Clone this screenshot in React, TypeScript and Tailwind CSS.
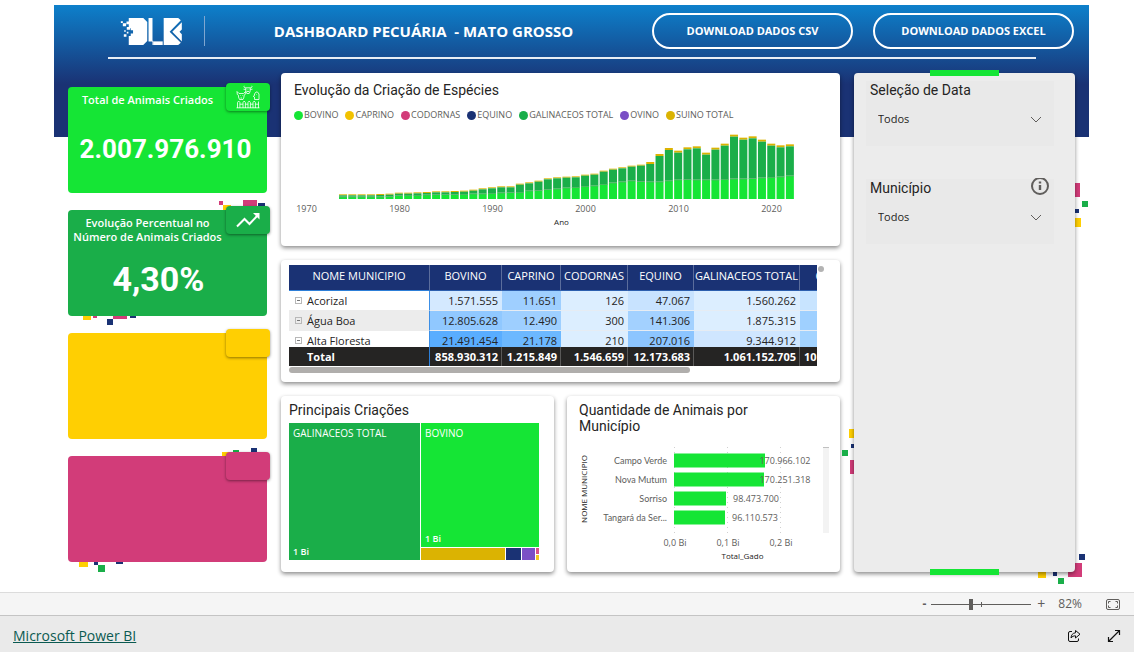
import React from "react";

type Square = [x: number, y: number, w: number, h: number, color: string];

const YELLOW = "#ffcf02";
const PINK = "#d23c79";
const NAVY = "#1a3274";
const GREEN = "#1aae49";

function Confetti({ squares }: { squares: Square[] }) {
  return (
    <svg className="pointer-events-none absolute inset-0 h-full w-full overflow-visible" aria-hidden="true">
      {squares.map(([x, y, w, h, c], i) => (
        <rect key={i} x={x} y={y} width={w} height={h} fill={c} />
      ))}
    </svg>
  );
}

function Logo() {
  return (
    <svg viewBox="208 50 190 88" className="h-[29px] w-[63px]" fill="#fff" role="img" aria-label="DLB">
      <path d="M234 53H278L290 65V123L278 135H234V108L240 108V100L247 100V90H240V84H234Z" />
      <path d="M210 63h6v5h-6zM216 69h10v9h-10zM227 64h8v8h-8zM220 90h5v5h-5zM219 102h8v8h-8zM228 80h10v9h-10zM228 95h5v5h-5z" />
      <path d="M294 53H306V122H308V135H306V124H294Z" />
      <path d="M308 124H337V135H308Z" />
      <path d="M340 53H384L392 60L358 95L392 128L384 135H340Z" />
      <path d="M395 66V88L388 95L395 102V124L366 95Z" />
    </svg>
  );
}

function AnimalsIcon() {
  return (
    <svg viewBox="0 0 24 24" className="h-6 w-6" fill="none" stroke="#fff" strokeWidth="0.8">
      <path d="M9 2.800C8 2.500 7.800 1.500 8.200.8M15 2.800c1-.3 1.200-1.300.8-2M9 2.800h6M7.500 4.200l2.300.3M16.500 4.200l-2.300.3M9.800 3v3.200l1 2.300h2.400l1-2.300V3M10.700 6.500h2.600M11 4.800h.4M12.700 4.800h.4" />
      <path d="M1 6.500l.3 3 1.200.8V12l1 2.500h3.500l1-2.500v-1.700l1.200-.8.3-3-2 2H3zM4 10.500h.5M6.500 10.500H7M4.500 13H6" />
      <path d="M18.500 9l1.500-2h1.500l1.500 2v5.500h-4.500V12l-1.300-.7 1.300-.8V9M20.500 9.500h.5" />
      <path d="M1.500 23v-5.500L2.700 16l1.200 1.500V23M7 23v-5.500L8.200 16l1.200 1.500V23M12 23v-5.500l1.200-1.500 1.200 1.500V23M17 23v-5.500l1.200-1.500 1.200 1.500V23M22.500 23v-6.500M.5 22.800h23M3.900 19.200H7M9.400 19.200H12M14.400 19.200H17M19.400 19.200h3.100" />
    </svg>
  );
}

function TrendIcon() {
  return (
    <svg viewBox="0 0 24 16" className="h-4 w-6" fill="none" stroke="#fff" strokeWidth="2">
      <path d="M1 14.500 8.500 7l5 5L21.500 3.500" />
      <path d="M17 1h6.500v6.500z" fill="#fff" stroke="none" />
    </svg>
  );
}

interface KpiProps {
  color: string;
  title?: string;
  value?: string;
  valueStyle?: string;
  icon?: React.ReactNode;
  squares?: Square[];
}

function Kpi({ color, title, value, valueStyle = "", icon, squares = [] }: KpiProps) {
  return (
    <section className="relative h-[106px]">
      <Confetti squares={squares} />
      <div className={`relative flex h-full flex-col items-center rounded ${color}`}>
        {title && (
          <h2 className="mt-[6px] w-full whitespace-pre-line pr-10 text-center text-[11px] leading-[14px] font-semibold text-white">
            {title}
          </h2>
        )}
        {value && (
          <p
            className={`flex flex-1 items-center pb-[2px] font-['Roboto',sans-serif] font-bold text-white ${valueStyle}`}
          >
            {value}
          </p>
        )}
      </div>
      <div
        className={`absolute -top-1 -right-[3px] flex h-7 w-11 items-center justify-center rounded-sm shadow-[0_1px_3px_rgba(0,0,0,0.45)] ${color}`}
      >
        {icon}
      </div>
    </section>
  );
}

const CARD = "rounded bg-white shadow-[0_2px_4px_rgba(0,0,0,0.45)]";
const TITLE = "font-['Roboto',sans-serif] text-sm leading-4 text-[#252423]";

const LEGEND = [
  ["BOVINO", "bg-[#15e535]"],
  ["CAPRINO", "bg-[#f2c201]"],
  ["CODORNAS", "bg-[#d23c79]"],
  ["EQUINO", "bg-[#1a3274]"],
  ["GALINACEOS TOTAL", "bg-[#1aae49]"],
  ["OVINO", "bg-[#7a4fc5]"],
  ["SUINO TOTAL", "bg-[#dbb302]"],
];

// One entry per year from 1974: total height and cattle height, in thirds of a pixel.
const TOTALS = [
  14, 14, 14, 14, 15, 16, 19, 19, 20, 21, 23, 23, 24, 25, 28, 32, 35, 38, 38, 46, 50, 55, 62, 65, 67, 68, 73, 76, 85,
  91, 95, 100, 103, 111, 135, 153, 145, 155, 158, 139, 154, 166, 193, 184, 188, 178, 166, 161, 164,
];
const CATTLE = [
  7, 7, 7, 7, 7, 8, 11, 12, 12, 13, 14, 14, 14, 15, 16, 16, 18, 19, 20, 21, 25, 26, 29, 31, 34, 36, 39, 40, 45, 49, 52,
  55, 53, 52, 52, 55, 58, 59, 58, 58, 58, 60, 61, 61, 62, 64, 66, 67, 70,
];

function SpeciesChart() {
  return (
    <svg viewBox="0 0 545 105" className="w-full" fontSize="9" textAnchor="middle" fill="#605e5c">
      {TOTALS.map((t, i) => {
        const x = 51 + i * 9.31;
        const h = t / 3;
        const b = CATTLE[i] / 3;
        const pig = i < 33 ? 1 : 2;
        return (
          <g key={i}>
            <rect x={x} y={74 - h} width="8" height={pig} fill="#dbb302" />
            <rect x={x} y={74 - h + pig} width="8" height={h - b - pig} fill="#1aae49" />
            <rect x={x} y={74 - b} width="8" height={b} fill="#15e535" />
            <rect x={x} y={74 - b} width="8" height="0.6" fill="#6a9a7c" />
          </g>
        );
      })}
      {[1970, 1980, 1990, 2000, 2010, 2020].map((year, i) => (
        <text key={year} x={18.5 + i * 93} y="87">
          {year}
        </text>
      ))}
      <text x="273.500" y="100" fontSize="8" fill="#252423">
        Ano
      </text>
    </svg>
  );
}

const COLUMNS = ["BOVINO", "CAPRINO", "CODORNAS", "EQUINO", "GALINACEOS TOTAL"];
const ROWS = [
  {
    name: "Acorizal",
    values: ["1.571.555", "11.651", "126", "47.067", "1.560.262"],
    fills: ["bg-[#d4e9ff]", "bg-[#9fcfff]", "bg-[#dceeff]", "bg-[#c8e3ff]", "bg-[#dceeff]"],
    last: "bg-[#c8e4ff]",
  },
  {
    name: "Água Boa",
    values: ["12.805.628", "12.490", "300", "141.306", "1.875.315"],
    fills: ["bg-[#90c8ff]", "bg-[#9ecfff]", "bg-[#dceeff]", "bg-[#a3d1ff]", "bg-[#dceeff]"],
    last: "bg-[#9fd0ff]",
  },
  {
    name: "Alta Floresta",
    values: ["21.491.454", "21.178", "210", "207.016", "9.344.912"],
    fills: ["bg-[#59adff]", "bg-[#6cb8ff]", "bg-[#dceeff]", "bg-[#8cc5ff]", "bg-[#cfe6ff]"],
    last: "bg-[#a3d3ff]",
  },
];
const TOTAL_ROW = ["858.930.312", "1.215.849", "1.546.659", "12.173.683", "1.061.152.705"];

function MunicipalityTable() {
  return (
    <div className={`h-[122px] py-[5px] pr-4 pl-2 ${CARD}`}>
      <div className="flex gap-px">
        <div className="h-[101px] min-w-0 flex-1 overflow-hidden">
          <table className="w-full min-w-[577px] table-fixed border-separate border-spacing-0 text-[11px] leading-[19px] text-[#252423]">
            <colgroup>
              <col className="w-[141px]" />
              <col className="w-[72px]" />
              <col className="w-[59px]" />
              <col className="w-[67px]" />
              <col className="w-[66px]" />
              <col className="w-[106px]" />
              <col />
            </colgroup>
            <thead>
              <tr className="bg-[#1a3274] text-white">
                <th className="h-[26px] border-r border-b border-r-[#5b6d9c] border-b-[#2d7fd8] pb-[5px] font-normal">
                  NOME MUNICIPIO
                </th>
                {COLUMNS.map((c) => (
                  <th
                    key={c}
                    className="border-r border-b border-r-[#5b6d9c] border-b-[#2d5fae] pb-[5px] font-normal whitespace-nowrap"
                  >
                    {c}
                  </th>
                ))}
                <th className="border-b border-b-[#2d5fae] pb-[5px] font-normal">OVINO</th>
              </tr>
            </thead>
            <tbody>
              {ROWS.map((row, i) => (
                <tr key={row.name}>
                  <td
                    className={`h-5 border-r border-b border-r-[#3c8fe6] border-b-[#ececec] ${i === 1 ? "bg-[#ececec]" : "bg-white"}`}
                  >
                    <span className="flex items-center gap-[5px] pl-[6px]">
                      <button
                        aria-label={`Recolher ${row.name}`}
                        className="flex h-[7px] w-[7px] items-center justify-center border border-[#b8b8b8]"
                      >
                        <span className="h-px w-[3px] bg-[#777]" />
                      </button>
                      {row.name}
                    </span>
                  </td>
                  {row.values.map((v, j) => (
                    <td key={j} className={`border-b border-[#e6ecf3] pr-1 text-right ${row.fills[j]}`}>
                      {v}
                    </td>
                  ))}
                  <td className={`border-b border-[#e6ecf3] ${row.last}`} />
                </tr>
              ))}
            </tbody>
            <tfoot className="sticky bottom-0">
              <tr className="bg-[#252423] font-bold text-white">
                <td className="h-[19px] border-r border-[#2d7fd8] pl-[18px]">Total</td>
                {TOTAL_ROW.map((v) => (
                  <td key={v} className="border-r border-[#5a5958] pr-[3px] text-right">
                    {v}
                  </td>
                ))}
                <td className="pl-1">10</td>
              </tr>
            </tfoot>
          </table>
        </div>
        <div className="mt-px h-[6px] w-[6px] rounded-full bg-[#b3b3b3]" />
      </div>
      <div className="mt-px mr-[7px] h-[6px]">
        <div className="h-full w-[76%] rounded-full bg-[#b0aeac]" />
      </div>
    </div>
  );
}

function Treemap() {
  return (
    <div className="flex h-[137px] gap-px text-[10px] leading-4 text-white">
      <div className="flex w-[131px] flex-col justify-between bg-[#1aae49] px-1 pt-[2px]">
        <span className="whitespace-nowrap">GALINACEOS TOTAL</span>
        <span className="text-[9px] font-semibold">1 Bi</span>
      </div>
      <div className="flex flex-1 flex-col gap-px">
        <div className="flex flex-1 flex-col justify-between bg-[#15e535] px-1 pt-[2px]">
          <span>BOVINO</span>
          <span className="text-[9px] font-semibold">1 Bi</span>
        </div>
        <div className="flex h-3 gap-px">
          <div className="flex-1 bg-[#dbb302]" />
          <div className="w-[15px] bg-[#1a3274]" />
          <div className="w-[13px] bg-[#7a4fc5]" />
          <div className="flex w-[3px] flex-col gap-px">
            <div className="flex-1 bg-[#d8508a]" />
            <div className="h-[5px] bg-[#f2c820]" />
          </div>
        </div>
      </div>
    </div>
  );
}

const CITIES: [name: string, value: string, bar: number, x: number][] = [
  ["Campo Verde", "170.966.102", 91, 210],
  ["Nova Mutum", "170.251.318", 90, 210],
  ["Sorriso", "98.473.700", 52, 181],
  ["Tangará da Ser...", "96.110.573", 51, 180],
];

function CityChart() {
  return (
    <svg viewBox="0 0 257 120" className="w-full" fontSize="9" fill="#605e5c">
      {[99.5, 152.5, 205.5].map((x) => (
        <line key={x} x1={x} x2={x} y1="2" y2="90" stroke="#d0d0d0" strokeDasharray="1 4" />
      ))}
      <rect x="248" y="2" width="6" height="86" fill="#f3f3f3" />
      <rect x="248" y="2" width="6" height="1" fill="#c0c0c0" />
      {CITIES.map(([name, value, bar, x], i) => (
        <g key={name}>
          <rect x="99" y={8.5 + i * 19} width={bar} height="14" fill="#15e535" />
          <text x="92" y={19 + i * 19} textAnchor="end" className="font-['Lato',sans-serif]">
            {name}
          </text>
          <text x={x} y={19 + i * 19} textAnchor="middle">
            {value}
          </text>
        </g>
      ))}
      {["0,0 Bi", "0,1 Bi", "0,2 Bi"].map((t, i) => (
        <text key={t} x={100 + i * 53} y="101" textAnchor="middle">
          {t}
        </text>
      ))}
      <text x="167.500" y="114" fontSize="8" textAnchor="middle" fill="#252423">
        Total_Gado
      </text>
      <text transform="translate(12 44) rotate(-90)" fontSize="8" textAnchor="middle" fill="#252423">
        NOME MUNICIPIO
      </text>
    </svg>
  );
}

function Slicer({ id, label, info }: { id: string; label: string; info?: boolean }) {
  return (
    <div className="flex h-[65px] flex-col bg-[#e9e9e9] px-1">
      <div className="flex h-[18px] items-center justify-between">
        <label htmlFor={id} className={TITLE}>
          {label}
        </label>
        {info && (
          <svg viewBox="0 0 20 20" className="h-5 w-5" fill="none" stroke="#605e5c" strokeWidth="2">
            <circle cx="10" cy="8" r="8" />
            <path d="M10 7v5M10 3.500v2" strokeWidth="2.400" />
          </svg>
        )}
      </div>
      <div className="relative mt-[10px] flex items-center px-2">
        <select id={id} className="h-5 w-full appearance-none bg-transparent text-[11px] text-[#252423] outline-none">
          <option>Todos</option>
        </select>
        <svg
          viewBox="0 0 12 7"
          className="pointer-events-none absolute right-2 h-[7px] w-3"
          fill="none"
          stroke="#605e5c"
          strokeWidth="1"
        >
          <path d="M1 1l5 5 5-5" />
        </svg>
      </div>
    </div>
  );
}

const PILL =
  "h-9 w-[201px] rounded-full border-2 border-white text-[11px] font-bold text-white hover:bg-white/10";

export default function App() {
  return (
    <div className="flex min-h-screen flex-col bg-white font-['Open_Sans','Noto_Sans',sans-serif]">
      <main className="flex-1 pt-[5px] pr-[45px] pb-5 pl-[54px]">
        <div className="bg-[linear-gradient(#0d80cb,#1a3274_60%)] bg-[length:100%_132px] bg-no-repeat px-[14px]">
          <header className="flex h-[52px] items-center pl-[52px]">
            <Logo />
            <div className="ml-[21px] h-[30px] w-px bg-[#7fa6d0]" />
            <h1 className="flex-1 pr-[10px] text-center text-[15px] font-bold whitespace-pre text-white">
              DASHBOARD PECUÁRIA  - MATO GROSSO
            </h1>
            <div className="flex gap-5 pr-px">
              <button className={PILL}>DOWNLOAD DADOS CSV</button>
              <button className={PILL}>DOWNLOAD DADOS EXCEL</button>
            </div>
          </header>
          <div className="mr-[39px] ml-10 h-[2px] bg-white/90" />

          <div className="mt-[14px] grid grid-cols-[199px_minmax(0,1fr)_221px] gap-[14px]">
            <div className="flex flex-col gap-[17px] pt-[14px]">
              <Kpi
                color="bg-[#15e535]"
                title="Total de Animais Criados"
                value="2.007.976.910"
                valueStyle="text-[26px] pr-1"
                icon={<AnimalsIcon />}
              />
              <Kpi
                color="bg-[#1aae49]"
                title={"Evolução Percentual no\nNúmero de Animais Criados"}
                value="4,30%"
                valueStyle="text-[34px] pr-[18px]"
                icon={<TrendIcon />}
                squares={[
                  [151, -9, 4, 4, PINK],
                  [155, -5, 8, 6, YELLOW],
                  [175, -10, 14, 8, PINK],
                  [190, -7, 7, 5, NAVY],
                  [15, 105, 8, 5, YELLOW],
                  [25, 105, 4, 3, PINK],
                  [39, 109, 6, 6, NAVY],
                  [45, 105, 14, 4, PINK],
                  [62, 105, 6, 3, NAVY],
                ]}
              />
              <Kpi color="bg-[#ffcf02]" />
              <Kpi
                color="bg-[#d23c79]"
                squares={[
                  [154, -4, 9, 5, YELLOW],
                  [165, -6, 6, 4, GREEN],
                  [183, -8, 6, 5, NAVY],
                  [11, 105, 9, 6, YELLOW],
                  [26, 105, 4, 4, NAVY],
                  [30, 109, 7, 7, GREEN],
                  [48, 105, 7, 3, NAVY],
                ]}
              />
            </div>

            <div className="flex flex-col gap-[14px]">
              <section className={`h-[173px] px-[7px] pt-[9px] ${CARD}`}>
                <h2 className={`pl-[6px] ${TITLE}`}>Evolução da Criação de Espécies</h2>
                <ul className="mt-2 flex gap-[7px] pl-[6px] text-[9px] leading-[18px] text-[#605e5c]">
                  {LEGEND.map(([name, color]) => (
                    <li key={name} className="flex items-center gap-px whitespace-nowrap">
                      <span className={`h-[9px] w-[9px] rounded-full ${color}`} />
                      {name}
                    </li>
                  ))}
                </ul>
                <div className="mt-px">
                  <SpeciesChart />
                </div>
              </section>

              <MunicipalityTable />

              <div className="grid grid-cols-2 gap-[13px]">
                <section className={`h-[176px] pt-[6px] pr-[15px] pl-2 ${CARD}`}>
                  <h2 className={`mb-[5px] ${TITLE}`}>Principais Criações</h2>
                  <Treemap />
                </section>
                <section className={`h-[176px] px-2 pt-[6px] ${CARD}`}>
                  <h2 className={`w-[190px] pl-1 ${TITLE}`}>Quantidade de Animais por Município</h2>
                  <div className="mt-[11px]">
                    <CityChart />
                  </div>
                </section>
              </div>
            </div>

            <aside className="relative">
              <Confetti
                squares={[
                  [220, 110, 6, 14, PINK],
                  [228, 128, 6, 6, GREEN],
                  [221, 136, 4, 4, NAVY],
                  [221, 145, 6, 9, YELLOW],
                  [-5, 356, 6, 9, YELLOW],
                  [-3, 371, 4, 4, NAVY],
                  [-12, 377, 6, 6, GREEN],
                  [-4, 387, 5, 14, PINK],
                  [225, 481, 6, 6, NAVY],
                  [214, 490, 14, 14, PINK],
                  [184, 497, 8, 8, YELLOW],
                  [199, 498, 4, 5, NAVY],
                  [204, 505, 6, 6, GREEN],
                ]}
              />
              <div className="relative flex h-full flex-col gap-[33px] rounded bg-[#ececec] pt-2 pr-[21px] pl-3 shadow-[0_2px_4px_rgba(0,0,0,0.45)]">
                <Slicer id="data" label="Seleção de Data" />
                <Slicer id="municipio" label="Município" info />
              </div>
              <div className="absolute -top-[3px] left-[76px] h-[6px] w-[69px] bg-[#15e535]" />
              <div className="absolute -bottom-[3px] left-[76px] h-[6px] w-[69px] bg-[#15e535]" />
            </aside>
          </div>
        </div>
      </main>

      <div className="flex h-6 items-center justify-end border-t border-b border-t-[#dcdcdc] border-b-[#c4c4c4] bg-[#f5f5f5] pr-[14px] text-xs text-[#605e5c]">
        <button aria-label="Reduzir" className="w-[14px] text-center font-bold">
          -
        </button>
        <div className="relative flex w-[100px] items-center">
          <input
            type="range"
            aria-label="Zoom"
            defaultValue={39}
            className="h-[11px] w-full appearance-none bg-[linear-gradient(#605e5c,#605e5c)] bg-[length:100%_1px] bg-center bg-no-repeat [&::-webkit-slider-thumb]:h-[11px] [&::-webkit-slider-thumb]:w-1 [&::-webkit-slider-thumb]:appearance-none [&::-webkit-slider-thumb]:bg-[#605e5c]"
          />
          <span className="pointer-events-none absolute left-[50px] h-[5px] w-px bg-[#605e5c]" />
        </div>
        <button aria-label="Ampliar" className="w-5 text-center text-sm">
          +
        </button>
        <span className="ml-[7px] text-xs">82%</span>
        <button aria-label="Ajustar à página" className="ml-6">
          <svg viewBox="0 0 14 11" className="h-[11px] w-[14px]" fill="none" stroke="#605e5c">
            <rect x="0.500" y="0.500" width="13" height="10" rx="1.500" />
            <path d="M2.500 4.500v-2h2M9.500 2.500h2v2M11.500 6.500v2h-2M4.500 8.500h-2v-2" />
          </svg>
        </button>
      </div>

      <footer className="flex h-9 items-center justify-between bg-[#eaeaea] pt-1 pr-[13px] pl-[13px]">
        <a href="#powerbi" className="text-sm text-[#0b5a51] underline">
          Microsoft Power BI
        </a>
        <div className="flex items-center gap-[26px]">
          <button aria-label="Compartilhar">
            <svg viewBox="0 0 14 14" className="h-[14px] w-[14px]" fill="none" stroke="#111" strokeLinejoin="round">
              <path d="M5 2.500H3A1.500 1.500 0 0 0 1.500 4v7A1.500 1.500 0 0 0 3 12.500h7A1.500 1.500 0 0 0 11.500 11V9.500" />
              <path d="M8.500 1.500 13 5.200 8.500 9V6.800C6.500 6.800 5.200 7.500 4 9c.2-3 1.700-5 4.500-5.200z" />
            </svg>
          </button>
          <button aria-label="Tela inteira">
            <svg viewBox="0 0 14 14" className="h-[14px] w-[14px]" fill="none" stroke="#111" strokeWidth="1.200">
              <path d="M1.500 12.500l11-11M8 1.500h4.500V6M1.500 8v4.500H6" />
            </svg>
          </button>
        </div>
      </footer>
    </div>
  );
}
